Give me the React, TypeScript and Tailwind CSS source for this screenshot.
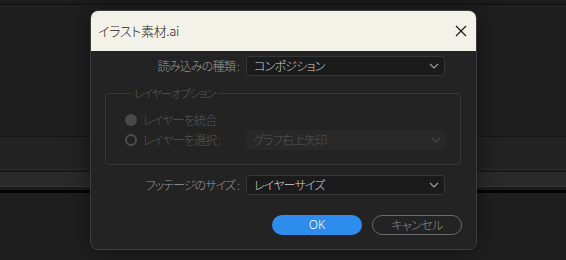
import React from "react";

const jp = { fontFamily: '"Noto Sans CJK JP", "Noto Sans", sans-serif', fontFeatureSettings: '"palt"' } as React.CSSProperties;

function Chevron({ color = "#a8a8a8" }: { color?: string }) {
  return (
    <svg width="10" height="6" viewBox="0 0 10 6" className="shrink-0">
      <path d="M1 1 L5 5 L9 1" fill="none" stroke={color} strokeWidth="1.1" />
    </svg>
  );
}

function Select({ text, disabled = false }: { text: string; disabled?: boolean }) {
  return (
    <div
      className={
        "flex h-[20px] items-center justify-between rounded-[3px] pl-[7px] pr-[5px] " +
        (disabled ? "w-[200px] bg-[#282828] text-[#565656]" : "w-[199px] border border-[#363636] bg-[#1b1b1b] text-[#d4d4d4]")
      }
    >
      <span className="text-[12px] font-light leading-none tracking-[-0.8px]">{text}</span>
      <Chevron color={disabled ? "#4a4a4a" : "#a0a0a0"} />
    </div>
  );
}

export default function App() {
  return (
    <div className="relative h-[260px] w-[566px] overflow-hidden bg-[#1f1f1f]" style={jp}>
      <div className="flex flex-col">
        <div className="h-[4px] bg-[#1c1c1c]" />
        <div className="h-[1px] bg-[#111111]" />
        <div className="h-[131px] bg-[#1f1f1f]" />
        <div className="h-[1px] bg-[#161616]" />
        <div className="h-[32px] bg-[#222222]" />
        <div className="h-[1px] bg-[#2c2c2c]" />
        <div className="h-[2px] bg-[#1a1a1a]" />
        <div className="h-[14px] bg-[#2a2a2a]" />
        <div className="h-[1px] bg-[#353535]" />
        <div className="h-[3px] bg-[#1c1c1c]" />
        <div className="h-[3px] bg-[#050505]" />
        <div className="h-[67px] bg-[#1f1f1f]" />
      </div>

      <div className="absolute left-[90px] top-[10px] flex h-[240px] w-[387px] flex-col overflow-hidden rounded-[8px] border border-[#3d3d3d] bg-[#232323] shadow-[0_0_24px_rgba(0,0,0,0.45)]">
        <div className="flex h-[40px] shrink-0 items-center justify-between bg-[#f3f2e8] pl-[7px] pr-[9px]">
          <span className="text-[13px] font-light tracking-[-0.3px] text-[#1a1a1a]">イラスト素材.ai</span>
          <svg width="12" height="12" viewBox="0 0 12 12">
            <path d="M1 1 L11 11 M11 1 L1 11" stroke="#1a1a1a" strokeWidth="1.2" />
          </svg>
        </div>

        <div className="flex flex-col pt-[5px] font-light">
          <div className="flex items-center">
            <div className="w-[148px] text-right text-[12px] tracking-[-0.8px] text-[#9a9a9a]">読み込みの種類 :</div>
            <div className="ml-[7px]">
              <Select text="コンポジション" />
            </div>
          </div>

          <fieldset className="ml-[14px] mt-[9px] w-[356px] rounded-[3px] border border-[#383838] pb-[14px] pl-[19px]">
            <legend className="ml-[6px] px-[3px] text-[11.5px] leading-[16px] tracking-[-1.3px] text-[#585858]">レイヤーオプション</legend>
            <div className="mt-[11px] flex h-[16px] items-center">
              <div className="h-[12px] w-[12px] rounded-full bg-[#4a4a4a]" />
              <span className="ml-[6px] text-[12px] tracking-[-0.8px] text-[#585858]">レイヤーを統合</span>
            </div>
            <div className="mt-[2px] flex h-[20px] items-center">
              <div className="h-[12px] w-[12px] rounded-full border-2 border-[#4c4c4c]" />
              <span className="ml-[6px] w-[103px] text-[12px] tracking-[-0.8px] text-[#585858]">レイヤーを選択 :</span>
              <Select text="グラフ右上矢印" disabled />
            </div>
          </fieldset>

          <div className="mt-[10px] flex items-center">
            <div className="w-[148px] text-right text-[12px] tracking-[-0.9px] text-[#9a9a9a]">フッテージのサイズ :</div>
            <div className="ml-[7px]">
              <Select text="レイヤーサイズ" />
            </div>
          </div>

          <div className="mt-[20px] flex justify-end gap-[10px] pr-[14px]">
            <div className="flex h-[20px] w-[90px] items-center justify-center rounded-full bg-[#2d8cec] text-[12px] text-white" style={{ fontFamily: '"Noto Sans", sans-serif' }}>
              OK
            </div>
            <div className="flex h-[20px] w-[90px] items-center justify-center rounded-full border-[1.5px] border-[#6a6a6a] text-[12px] tracking-[-0.6px] text-[#8c8c8c]">
              キャンセル
            </div>
          </div>
        </div>
      </div>
    </div>
  );
}
